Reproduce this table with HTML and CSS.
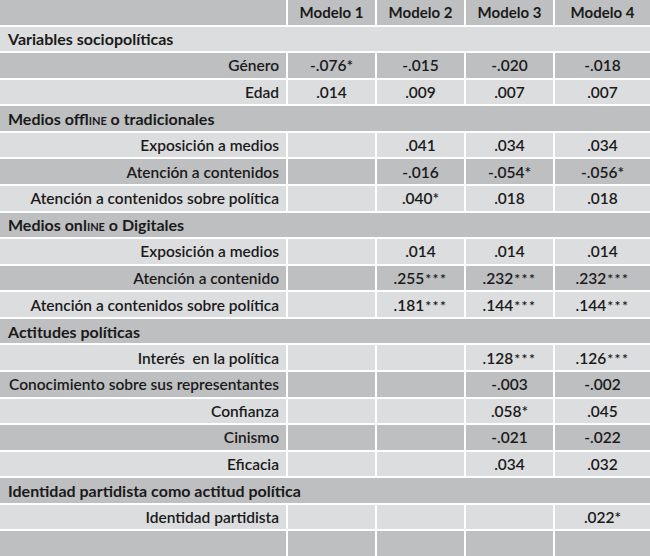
FILE: index.html
```html
<!DOCTYPE html>
<html lang="es">
<head>
<meta charset="utf-8">
<link rel="stylesheet" href="styles.css">
</head>
<body>
<div class="table">
  <div class="row dark">
    <div class="label"></div><div class="num head"><span>Modelo 1</span></div><div class="num head"><span>Modelo 2</span></div><div class="num head"><span>Modelo 3</span></div><div class="num head"><span>Modelo 4</span></div>
  </div>
  <div class="row light"><div class="section"><span>Variables sociopolíticas</span></div></div>
  <div class="row dark">
    <div class="label"><span>Género</span></div><div class="num"><span>-.076*</span></div><div class="num"><span>-.015</span></div><div class="num"><span>-.020</span></div><div class="num"><span>-.018</span></div>
  </div>
  <div class="row light">
    <div class="label"><span>Edad</span></div><div class="num"><span>.014</span></div><div class="num"><span>.009</span></div><div class="num"><span>.007</span></div><div class="num"><span>.007</span></div>
  </div>
  <div class="row dark"><div class="section"><span>Medios offl<span class="sc">ine</span> o tradicionales</span></div></div>
  <div class="row light">
    <div class="label"><span>Exposición a medios</span></div><div class="num"></div><div class="num"><span>.041</span></div><div class="num"><span>.034</span></div><div class="num"><span>.034</span></div>
  </div>
  <div class="row dark">
    <div class="label"><span>Atención a contenidos</span></div><div class="num"></div><div class="num"><span>-.016</span></div><div class="num"><span>-.054*</span></div><div class="num"><span>-.056*</span></div>
  </div>
  <div class="row light">
    <div class="label"><span>Atención a contenidos sobre política</span></div><div class="num"></div><div class="num"><span>.040*</span></div><div class="num"><span>.018</span></div><div class="num"><span>.018</span></div>
  </div>
  <div class="row dark"><div class="section"><span>Medios onl<span class="sc">ine</span> o Digitales</span></div></div>
  <div class="row light">
    <div class="label"><span>Exposición a medios</span></div><div class="num"></div><div class="num"><span>.014</span></div><div class="num"><span>.014</span></div><div class="num"><span>.014</span></div>
  </div>
  <div class="row dark">
    <div class="label"><span>Atención a contenido</span></div><div class="num"></div><div class="num"><span>.255<span class="st">***</span></span></div><div class="num"><span>.232<span class="st">***</span></span></div><div class="num"><span>.232<span class="st">***</span></span></div>
  </div>
  <div class="row light">
    <div class="label"><span>Atención a contenidos sobre política</span></div><div class="num"></div><div class="num"><span>.181<span class="st">***</span></span></div><div class="num"><span>.144<span class="st">***</span></span></div><div class="num"><span>.144<span class="st">***</span></span></div>
  </div>
  <div class="row dark"><div class="section"><span>Actitudes políticas</span></div></div>
  <div class="row light">
    <div class="label"><span>Interés&nbsp; en la política</span></div><div class="num"></div><div class="num"></div><div class="num"><span>.128<span class="st">***</span></span></div><div class="num"><span>.126<span class="st">***</span></span></div>
  </div>
  <div class="row dark">
    <div class="label"><span>Conocimiento sobre sus representantes</span></div><div class="num"></div><div class="num"></div><div class="num"><span>-.003</span></div><div class="num"><span>-.002</span></div>
  </div>
  <div class="row light">
    <div class="label"><span>Confianza</span></div><div class="num"></div><div class="num"></div><div class="num"><span>.058*</span></div><div class="num"><span>.045</span></div>
  </div>
  <div class="row dark">
    <div class="label"><span>Cinismo</span></div><div class="num"></div><div class="num"></div><div class="num"><span>-.021</span></div><div class="num"><span>-.022</span></div>
  </div>
  <div class="row light">
    <div class="label"><span>Eficacia</span></div><div class="num"></div><div class="num"></div><div class="num"><span>.034</span></div><div class="num"><span>.032</span></div>
  </div>
  <div class="row dark"><div class="section"><span>Identidad partidista como actitud política</span></div></div>
  <div class="row light">
    <div class="label"><span>Identidad partidista</span></div><div class="num"></div><div class="num"></div><div class="num"></div><div class="num"><span>.022*</span></div>
  </div>
  <div class="row dark">
    <div class="label"></div><div class="num"></div><div class="num"></div><div class="num"></div><div class="num"></div>
  </div>
</div>
</body>
</html>
```
FILE: styles.css
```css
html, body {
  margin: 0;
  padding: 0;
  background: #ffffff;
}

.table {
  display: grid;
  grid-template-columns: 286px 87px 87px 87px 1fr;
  grid-template-rows: repeat(21, 1fr);
  gap: 2px;
  width: 650px;
  height: 556px;
  background: #ffffff;
  font-family: "Lato", "Liberation Sans", sans-serif;
  font-size: 15.5px;
  font-weight: 600;
  color: #1a1a1a;
}

.row {
  display: contents;
}

.row.dark > div {
  background: #bebfc1;
}

.row.light > div {
  background: #dcdddf;
}

.label,
.num,
.section {
  display: flex;
  align-items: center;
  white-space: nowrap;
}

.label {
  justify-content: flex-end;
  padding-right: 7px;
}

.num {
  justify-content: center;
}

.head {
  font-weight: 700;
  font-size: 15px;
}

.section {
  grid-column: 1 / -1;
  padding-left: 8px;
  font-weight: 700;
  font-size: 16px;
}

.sc {
  font-variant: small-caps;
}

.st {
  font-size: 14px;
  letter-spacing: 1.5px;
  margin-left: 1px;
}
```
